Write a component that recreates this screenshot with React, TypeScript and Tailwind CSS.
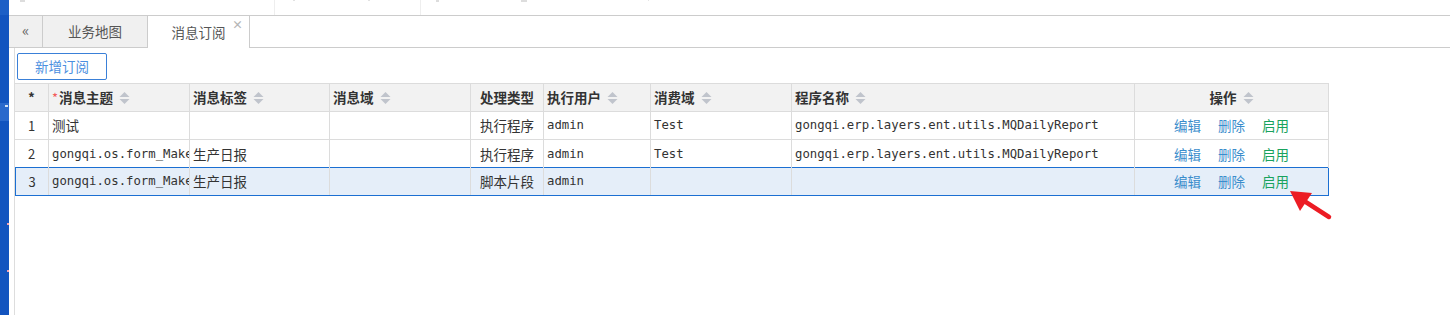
import React from 'react';

const cjk = '"Noto Sans CJK SC", "Noto Sans", sans-serif';

type Col = {
  w: number;
  title: string;
  center?: boolean;
  sort?: boolean;
  required?: boolean;
};

const cols: Col[] = [
  { w: 34, title: '*', center: true },
  { w: 141, title: '消息主题', sort: true, required: true },
  { w: 140, title: '消息标签', sort: true },
  { w: 141, title: '消息域', sort: true },
  { w: 73, title: '处理类型', center: true },
  { w: 107, title: '执行用户', sort: true },
  { w: 141, title: '消费域', sort: true },
  { w: 343, title: '程序名称', sort: true },
  { w: 194, title: '操作', center: true, sort: true },
];

type Row = {
  topic: string;
  tag: string;
  domain: string;
  kind: string;
  user: string;
  consumer: string;
  program: string;
};

const rows: Row[] = [
  { topic: '测试', tag: '', domain: '', kind: '执行程序', user: 'admin', consumer: 'Test', program: 'gongqi.erp.layers.ent.utils.MQDailyReport' },
  { topic: 'gongqi.os.form_MakeDailyReport', tag: '生产日报', domain: '', kind: '执行程序', user: 'admin', consumer: 'Test', program: 'gongqi.erp.layers.ent.utils.MQDailyReport' },
  { topic: 'gongqi.os.form_MakeDailyReport', tag: '生产日报', domain: '', kind: '脚本片段', user: 'admin', consumer: '', program: '' },
];

function SortIcon() {
  return (
    <svg width="11" height="14" viewBox="0 0 11 14" className="ml-[6px] shrink-0">
      <polygon points="5.5,1 10.5,6 0.5,6" fill="#c0c4cc" />
      <polygon points="0.5,8 10.5,8 5.5,13" fill="#c0c4cc" />
    </svg>
  );
}

// latin text in the grid is monospace, chinese falls back to CJK
function CellText({ text }: { text: string }) {
  const latin = /^[\x00-\x7f]+$/.test(text);
  if (latin) {
    return (
      <span className="text-[12.3px]" style={{ fontFamily: '"DejaVu Sans Mono", "Liberation Mono", monospace' }}>
        {text}
      </span>
    );
  }
  return <span className="text-[13.5px]">{text}</span>;
}

function HeaderRow() {
  return (
    <div className="flex h-[28px] border-b border-[#dcdcdc] bg-[#f2f2f2]">
      {cols.map((c, i) => (
        <div
          key={i}
          style={{ width: c.w }}
          className={`flex shrink-0 items-center border-r border-[#dcdcdc] px-[3px] text-[13.5px] font-bold text-[#333] ${c.center ? 'justify-center' : ''}`}
        >
          {c.required && <span className="mr-[1px] text-[13px] font-normal text-[#f25a5a]">*</span>}
          <span>{c.title}</span>
          {c.sort && <SortIcon />}
        </div>
      ))}
    </div>
  );
}

function DataRow({ row, index, selected, last }: { row: Row; index: number; selected?: boolean; last?: boolean }) {
  const values = [row.topic, row.tag, row.domain, row.kind, row.user, row.consumer, row.program];
  const base = selected
    ? 'h-[29px] -mt-px border border-[#1b6fd2] bg-[#e5eef9]'
    : `h-[28px] bg-white ${last ? '' : 'border-b border-[#dcdcdc]'}`;

  return (
    <div className={`flex ${base}`}>
      <div
        style={{ width: selected ? 33 : 34 }}
        className="flex shrink-0 items-center justify-center border-r border-[#dcdcdc] text-[13px] text-[#333]"
      >
        {index}
      </div>
      {values.map((v, i) => (
        <div
          key={i}
          style={{ width: cols[i + 1].w }}
          className={`flex shrink-0 items-center overflow-hidden whitespace-nowrap border-r border-[#dcdcdc] px-[3px] text-[#333] ${cols[i + 1].center ? 'justify-center' : ''}`}
        >
          <CellText text={v} />
        </div>
      ))}
      <div
        style={{ width: selected ? 193 : 194 }}
        className={`flex shrink-0 items-center justify-center gap-[17px] text-[13.5px] ${selected ? '' : 'border-r border-[#dcdcdc]'}`}
      >
        <span className="text-[#3b8dcc]">编辑</span>
        <span className="text-[#3b8dcc]">删除</span>
        <span className="text-[#19a35e]">启用</span>
      </div>
    </div>
  );
}

export default function App() {
  return (
    <div className="relative flex h-[315px] w-[1450px] overflow-hidden bg-white" style={{ fontFamily: cjk }}>
      {/* left nav strip, mostly cut off */}
      <div className="flex w-[9px] shrink-0 flex-col bg-[#1254bf]">
        <div className="h-[15px] bg-[#1c5fc6]" />
        <div className="h-[88px]" />
        <div className="relative h-[18px] bg-[#2a69cc]">
          <div className="absolute right-[1px] top-[2px] h-[2px] w-[3px] bg-white/80" />
        </div>
        <div className="relative flex-1">
          <div className="absolute right-0 top-[102px] h-[2px] w-[2px] bg-[#f0a0b0]" />
          <div className="absolute right-0 top-[149px] h-[2px] w-[2px] bg-[#f0a0b0]" />
        </div>
      </div>

      <div className="flex min-w-0 flex-1 flex-col">
        {/* top toolbar, clipped */}
        <div className="flex h-[16px] shrink-0 border-b border-[#cccccc]">
          <div className="ml-[11px] h-[2px] w-[5px] bg-[#dddddd]" />
          <div className="ml-[249px] h-full border-r border-[#eeeeee]" />
          <div className="ml-[18px] h-[1px] w-[2px] bg-[#e2e2e2]" />
          <div className="ml-[73px] h-[1px] w-[2px] bg-[#e2e2e2]" />
          <div className="ml-[50px] h-full border-r border-[#eeeeee]" />
          <div className="ml-[15px] h-[2px] w-[3px] bg-[#dddddd]" />
          <div className="ml-[82px] h-[2px] w-[6px] bg-[#dddddd]" />
          <div className="ml-[121px] h-[1px] w-[1px] bg-[#e5e5e5]" />
        </div>

        {/* tabs */}
        <div className="flex h-[32px] shrink-0">
          <div className="flex w-[34px] items-center justify-center border-b border-r border-[#cccccc] bg-[#f0f0f0] pb-[2px] text-[15px] text-[#666]">
            «
          </div>
          <div className="flex w-[105px] items-center justify-center border-b border-r border-[#cccccc] bg-[#f0f0f0] text-[13.5px] text-[#555]">
            业务地图
          </div>
          <div className="relative flex w-[102px] items-center justify-center border-r border-[#cccccc] bg-white text-[13.5px] text-[#555]">
            消息订阅
            <span className="absolute right-[6px] top-[1px] text-[11px] font-bold leading-[14px] text-[#b5b5b5]">×</span>
          </div>
          <div className="flex-1 border-b border-[#cccccc]" />
        </div>

        {/* content */}
        <div className="ml-[5px] flex flex-1 flex-col border-l border-[#dddddd]">
          <div className="ml-[2px] mt-[5px]">
            <button className="h-[27px] w-[90px] rounded-[2px] border border-[#3a80d8] bg-white text-[13.5px] text-[#4b8fe0]">
              新增订阅
            </button>
          </div>

          <div className="mt-[3px] w-[1314px] border-t border-[#dcdcdc]">
            <HeaderRow />
            {rows.map((r, i) => (
              <DataRow key={i} row={r} index={i + 1} selected={i === 2} last={i === 1} />
            ))}
          </div>
        </div>
      </div>

      {/* red annotation arrow */}
      <svg className="pointer-events-none absolute left-[1280px] top-[183px]" width="60" height="45" viewBox="0 0 60 45">
        <line x1="25" y1="18.5" x2="49" y2="34" stroke="#ec1c24" strokeWidth="4.5" strokeLinecap="round" />
        <polygon points="10,8 32,10 20,28" fill="#ec1c24" />
      </svg>
    </div>
  );
}
